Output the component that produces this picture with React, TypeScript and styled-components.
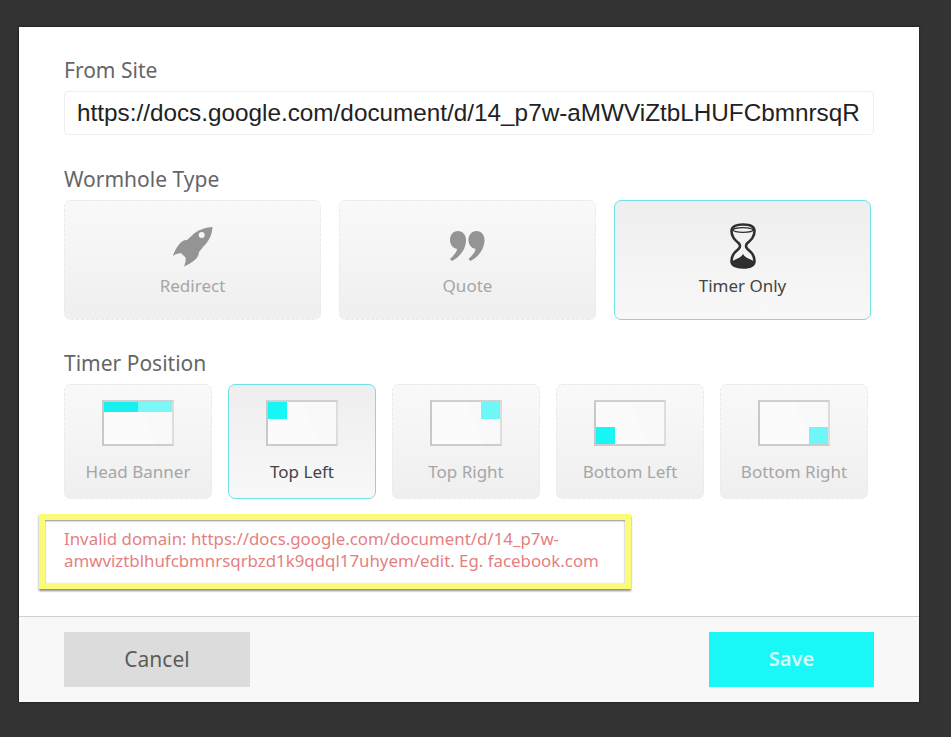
import styled, { createGlobalStyle } from 'styled-components'

const GlobalStyle = createGlobalStyle`
  html, body {
    margin: 0;
    background: #333333;
  }
  * {
    box-sizing: border-box;
  }
`

const Page = styled.div`
  width: 951px;
  height: 737px;
  padding: 27px 32px 35px 19px;
  background: #333333;
`

const Modal = styled.div`
  width: 900px;
  height: 675px;
  display: flex;
  flex-direction: column;
  background: #ffffff;
  box-shadow: 0 0 2px #111111;
  font-family: 'Noto Sans', sans-serif;
`

const Body = styled.div`
  flex: 1;
  padding: 31px 45px 0;
`

const Label = styled.div`
  font-size: 21px;
  line-height: 24px;
  color: #666666;
  margin-bottom: 9px;
`

const UrlInput = styled.input`
  display: block;
  width: 810px;
  height: 44px;
  padding: 0 12px;
  margin-bottom: 32px;
  border: 1px solid #eeeeee;
  border-radius: 4px;
  background: #ffffff;
  color: #222222;
  font-family: 'Liberation Sans', Arial, sans-serif;
  font-size: 24.3px;
  outline: none;
`

const TypeRow = styled.div`
  display: flex;
  gap: 18px;
  margin-bottom: 31px;
`

const PositionRow = styled.div`
  display: flex;
  gap: 16px;
  margin-bottom: 15px;
`

const Card = styled.div<{ $active?: boolean }>`
  display: flex;
  flex-direction: column;
  align-items: center;
  border-radius: 7px;
  border: 1px ${({ $active }) => ($active ? 'solid #6fe3e3' : 'dashed #e9e9e9')};
  background: linear-gradient(
    ${({ $active }) => ($active ? '#eeeeee, #f8f8f8' : '#f9f9f9, #efefef')}
  );
  color: ${({ $active }) => ($active ? '#444444' : '#a6a6a6')};
  font-size: 17px;
  line-height: 22px;
`

const TypeCard = styled(Card)`
  width: 257px;
  height: 120px;
  padding-top: 22px;
`

const PositionCard = styled(Card)`
  width: 148px;
  height: 115px;
  padding-top: 15px;
`

const IconSlot = styled.div`
  height: 46px;
  margin-bottom: 6px;
  display: flex;
  align-items: center;
  justify-content: center;
`

const Frame = styled.div<{ $right?: boolean; $bottom?: boolean }>`
  width: 72px;
  height: 46px;
  margin-bottom: 15px;
  display: flex;
  justify-content: ${({ $right }) => ($right ? 'flex-end' : 'flex-start')};
  align-items: ${({ $bottom }) => ($bottom ? 'flex-end' : 'flex-start')};
  border: 2px solid;
  border-color: #cfcfcf #dddddd #cccccc #c8c8c8;
  background: linear-gradient(65deg, #fbfbfb 60%, #f9f9f9 60%);
`

const Corner = styled.div<{ $faded?: boolean }>`
  width: 19px;
  height: 17px;
  background: ${({ $faded }) => ($faded ? '#6ff7f7' : '#18f5f5')};
`

const Banner = styled.div`
  width: 100%;
  height: 10px;
  background: linear-gradient(90deg, #18f0f0 50%, #7af7f7 50%);
`

const ErrorBox = styled.div`
  width: 592px;
  height: 75px;
  margin-left: -25px;
  padding: 8px 10px 0 19px;
  border: 6px solid #fbfb78;
  background: #ffffff;
  box-shadow: 0 2px 2px #8a8a8a, inset 0 1px 2px #8f8f8f;
  color: #e57f7f;
  font-size: 16.85px;
  line-height: 22px;
`

const Footer = styled.div`
  height: 86px;
  padding: 15px 45px 0;
  display: flex;
  justify-content: space-between;
  align-items: flex-start;
  border-top: 1px solid #cfcfcf;
  background: #f8f8f8;
`

const FooterButton = styled.div<{ $primary?: boolean }>`
  height: 55px;
  width: ${({ $primary }) => ($primary ? '165px' : '186px')};
  padding-bottom: 2px;
  display: flex;
  align-items: center;
  justify-content: center;
  background: ${({ $primary }) => ($primary ? '#1af7f7' : '#dcdcdc')};
  color: ${({ $primary }) => ($primary ? '#d4fbfb' : '#5c5c5c')};
  font-size: ${({ $primary }) => ($primary ? '20px' : '21px')};
  font-weight: ${({ $primary }) => ($primary ? 600 : 400)};
`

const RocketIcon = () => (
  <svg width="41" height="41" viewBox="0 0 41 41">
    <path
      fillRule="evenodd"
      fill="#949494"
      d="M40.5 1C33 1.5 25 4 20 9.5L15 14C9 13.5 4.5 21 0.7 30C4 28 7 27 9.5 27.5L13.5 31.5C14 34 13.5 37 12 40.5C20 37 27 32 27 26L31.5 20.5C37 15 40 9 40.5 1ZM29.7 6A3 3 0 1 0 29.7 12A3 3 0 1 0 29.7 6Z"
    />
  </svg>
)

const QuoteIcon = () => (
  <svg width="35" height="30" viewBox="0 0 35 30">
    <path
      fill="#949494"
      d="M8 0C13 0 16 4 16 9C16 18 10 26 2 30L0 28C4 24 7 21 7 17.8C3 17.4 0 13.5 0 9C0 4 3 0 8 0ZM26.5 0C31.5 0 34.5 4 34.5 9C34.5 18 28.5 26 20.5 30L18.5 28C22.5 24 25.5 21 25.5 17.8C21.5 17.4 18.5 13.5 18.5 9C18.5 4 21.5 0 26.5 0Z"
    />
  </svg>
)

const HourglassIcon = () => (
  <svg width="28" height="46" viewBox="0 0 28 46">
    <path
      fill="none"
      stroke="#2e2e2e"
      strokeWidth="2.6"
      d="M2.5 8C2.5 3.5 7 1.5 14 1.5S25.5 3.5 25.5 8C25.5 14 22 17 18.5 20C16.5 21.8 16.5 24.2 18.5 26C22 29 25.5 32 25.5 38C25.5 42.5 21 44.5 14 44.5S2.5 42.5 2.5 38C2.5 32 6 29 9.5 26C11.5 24.2 11.5 21.8 9.5 20C6 17 2.5 14 2.5 8Z"
    />
    <ellipse cx="14" cy="7" rx="10" ry="2.4" fill="none" stroke="#2e2e2e" strokeWidth="1.2" />
    <path fill="#2e2e2e" d="M2.5 39C5 36 11 36 14 31C17 36 23 36 25.5 39C25.5 42.5 21 44.5 14 44.5S2.5 42.5 2.5 39Z" />
  </svg>
)

const App = () => {
  return (
    <Page>
      <GlobalStyle />
      <Modal>
        <Body>
          <Label>From Site</Label>
          <UrlInput readOnly value="https://docs.google.com/document/d/14_p7w-aMWViZtbLHUFCbmnrsqR" />

          <Label>Wormhole Type</Label>
          <TypeRow>
            <TypeCard>
              <IconSlot><RocketIcon /></IconSlot>
              Redirect
            </TypeCard>
            <TypeCard>
              <IconSlot><QuoteIcon /></IconSlot>
              Quote
            </TypeCard>
            <TypeCard $active>
              <IconSlot><HourglassIcon /></IconSlot>
              Timer Only
            </TypeCard>
          </TypeRow>

          <Label>Timer Position</Label>
          <PositionRow>
            <PositionCard>
              <Frame><Banner /></Frame>
              Head Banner
            </PositionCard>
            <PositionCard $active>
              <Frame><Corner /></Frame>
              Top Left
            </PositionCard>
            <PositionCard>
              <Frame $right><Corner $faded /></Frame>
              Top Right
            </PositionCard>
            <PositionCard>
              <Frame $bottom><Corner /></Frame>
              Bottom Left
            </PositionCard>
            <PositionCard>
              <Frame $right $bottom><Corner $faded /></Frame>
              Bottom Right
            </PositionCard>
          </PositionRow>

          <ErrorBox>
            Invalid domain: https://docs.google.com/document/d/14_p7w-amwviztblhufcbmnrsqrbzd1k9qdql17uhyem/edit. Eg. facebook.com
          </ErrorBox>
        </Body>
        <Footer>
          <FooterButton>Cancel</FooterButton>
          <FooterButton $primary>Save</FooterButton>
        </Footer>
      </Modal>
    </Page>
  )
}

export default App
